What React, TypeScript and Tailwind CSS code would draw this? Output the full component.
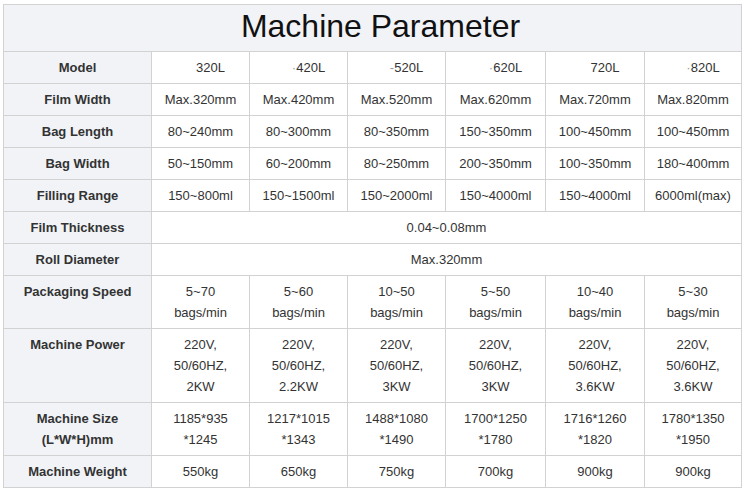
import React from "react";

const models = ["320L", "·420L", "-520L", "·620L", "720L", "·820L"];

type Row = { label: string[]; values?: string[][]; span?: string };

const rows: Row[] = [
  { label: ["Film Width"], values: [["Max.320mm"], ["Max.420mm"], ["Max.520mm"], ["Max.620mm"], ["Max.720mm"], ["Max.820mm"]] },
  { label: ["Bag Length"], values: [["80~240mm"], ["80~300mm"], ["80~350mm"], ["150~350mm"], ["100~450mm"], ["100~450mm"]] },
  { label: ["Bag Width"], values: [["50~150mm"], ["60~200mm"], ["80~250mm"], ["200~350mm"], ["100~350mm"], ["180~400mm"]] },
  { label: ["Filling Range"], values: [["150~800ml"], ["150~1500ml"], ["150~2000ml"], ["150~4000ml"], ["150~4000ml"], ["6000ml(max)"]] },
  { label: ["Film Thickness"], span: "0.04~0.08mm" },
  { label: ["Roll Diameter"], span: "Max.320mm" },
  {
    label: ["Packaging Speed"],
    values: [
      ["5~70", "bags/min"],
      ["5~60", "bags/min"],
      ["10~50", "bags/min"],
      ["5~50", "bags/min"],
      ["10~40", "bags/min"],
      ["5~30", "bags/min"],
    ],
  },
  {
    label: ["Machine Power"],
    values: [
      ["220V,", "50/60HZ,", "2KW"],
      ["220V,", "50/60HZ,", "2.2KW"],
      ["220V,", "50/60HZ,", "3KW"],
      ["220V,", "50/60HZ,", "3KW"],
      ["220V,", "50/60HZ,", "3.6KW"],
      ["220V,", "50/60HZ,", "3.6KW"],
    ],
  },
  {
    label: ["Machine Size", "(L*W*H)mm"],
    values: [
      ["1185*935", "*1245"],
      ["1217*1015", "*1343"],
      ["1488*1080", "*1490"],
      ["1700*1250", "*1780"],
      ["1716*1260", "*1820"],
      ["1780*1350", "*1950"],
    ],
  },
  { label: ["Machine Weight"], values: [["550kg"], ["650kg"], ["750kg"], ["700kg"], ["900kg"], ["900kg"]] },
];

function Lines({ lines }: { lines: string[] }) {
  return (
    <>
      {lines.map((l, i) => (
        <div key={i}>{l}</div>
      ))}
    </>
  );
}

export default function App() {
  const label = "bg-[#f2f3f7] text-center font-bold text-[#333333] py-[5px] px-1";
  const cell = "bg-white text-center text-[#333333] py-[5px] px-1";
  return (
    <div
      className="w-[749px] h-[493px] bg-white pl-[3px] pt-[4px]"
      style={{ fontFamily: '"Liberation Sans", Arial, sans-serif' }}
    >
      <div className="w-[739px] grid grid-cols-[147px_97px_97px_97px_99px_98px_96px] gap-px p-px bg-[#d2d2d2] text-[13px] leading-[21px]">
        <div className="col-span-7 bg-[#f2f3f7] h-[46px] flex items-center justify-center pl-[16px] pb-[5px] text-[32px] leading-[36px] text-[#111111]">
          Machine Parameter
        </div>
        <div className={label}>Model</div>
        {models.map((m, i) => (
          <div key={i} className={`${cell} pl-[24px]`}>
            {m.startsWith("·") || m.startsWith("-") ? (
              <>
                <span className="text-[#9a9a9a]">{m[0]}</span>
                {m.slice(1)}
              </>
            ) : (
              m
            )}
          </div>
        ))}
        {rows.map((r, ri) => (
          <React.Fragment key={ri}>
            <div className={label}>
              <Lines lines={r.label} />
            </div>
            {r.span ? (
              <div className={`${cell} col-span-6`}>{r.span}</div>
            ) : (
              r.values!.map((v, vi) => (
                <div key={vi} className={cell}>
                  <Lines lines={v} />
                </div>
              ))
            )}
          </React.Fragment>
        ))}
      </div>
    </div>
  );
}
